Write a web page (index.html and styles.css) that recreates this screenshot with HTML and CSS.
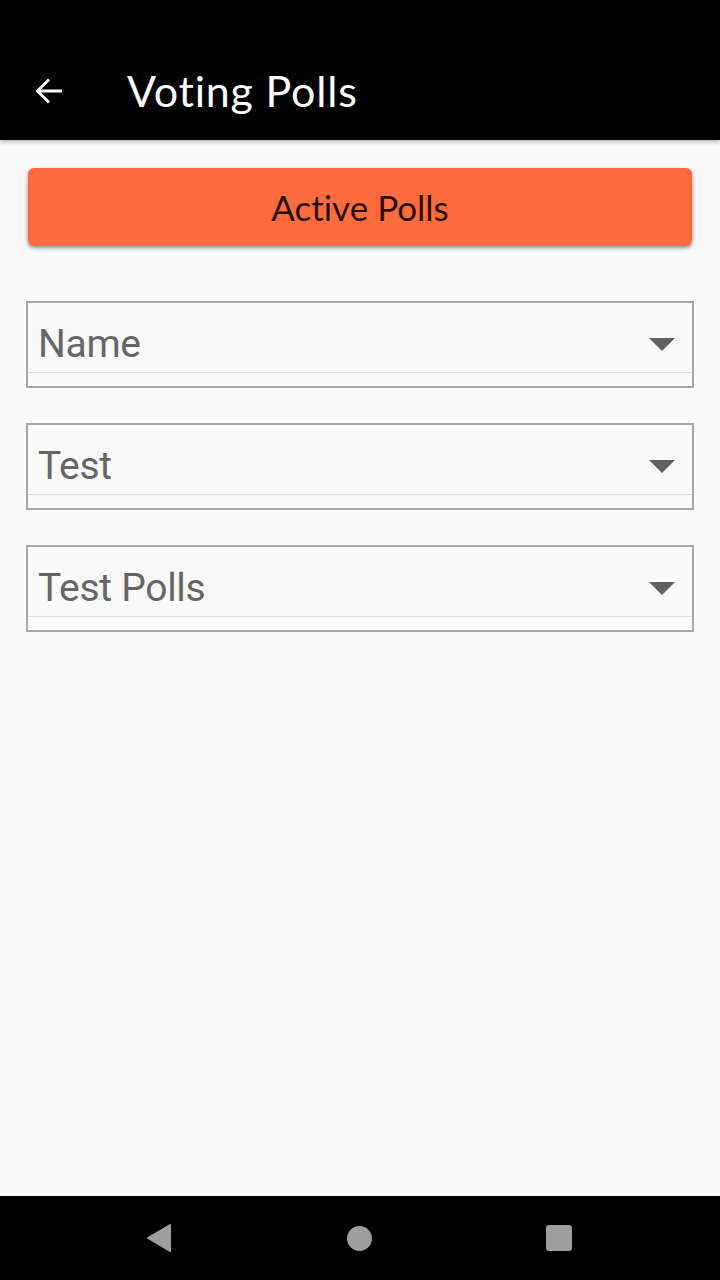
FILE: index.html
```html
<!DOCTYPE html>
<html>
<head>
<meta charset="utf-8">
<link rel="stylesheet" href="styles.css">
</head>
<body>
<div class="screen">
  <header class="appbar">
    <div class="toolbar">
      <svg class="back" width="28" height="28" viewBox="0 0 28 28"><path d="M27 14H2.5M14 2.5L2.5 14 14 25.5" fill="none" stroke="#fff" stroke-width="3"/></svg>
      <h1 class="title">Voting Polls</h1>
    </div>
  </header>
  <main class="content">
    <button class="primary">Active Polls</button>
    <div class="spinner"><div class="row"><span class="value">Name</span><span class="caret"></span></div></div>
    <div class="spinner"><div class="row"><span class="value">Test</span><span class="caret"></span></div></div>
    <div class="spinner"><div class="row"><span class="value">Test Polls</span><span class="caret"></span></div></div>
  </main>
  <nav class="navbar">
    <svg width="26" height="30" viewBox="0 0 26 30"><path d="M24 2 L2 15 L24 28 Z" fill="#9e9e9e" stroke="#9e9e9e" stroke-width="2" stroke-linejoin="round"/></svg>
    <span class="home"></span>
    <span class="recent"></span>
  </nav>
</div>
</body>
</html>
```
FILE: styles.css
```css
html, body { margin: 0; padding: 0; }
body { background: #fafafa; font-family: "Lato", "Open Sans", sans-serif; font-variant-ligatures: none; }
.screen { width: 720px; height: 1280px; display: flex; flex-direction: column; overflow: hidden; }
.appbar { background: #000; height: 140px; display: flex; flex-direction: column; justify-content: flex-end; box-shadow: 0 2px 4px rgba(0,0,0,0.25); position: relative; z-index: 1; }
.toolbar { height: 92px; display: flex; align-items: center; padding-bottom: 8px; box-sizing: border-box; }
.back { margin-left: 35px; margin-top: 2px; }
.title { margin: 0 0 0 64px; color: #fff; font-weight: 400; font-size: 43px; font-family: "Lato", sans-serif; letter-spacing: 0.8px; font-variant-ligatures: none; }
.content { flex: 1; padding: 28px 27px 0 26px; display: flex; flex-direction: column; }
.primary { height: 78px; margin: 0 1px 55px 2px; background: #ff6d3f; border: none; border-radius: 6px; box-shadow: 0 2px 4px rgba(0,0,0,0.45); color: #2a0f06; font-family: "Lato", sans-serif; font-size: 35px; padding: 0; font-variant-ligatures: none; }
.spinner { height: 87px; border: 2px solid #a8a8a8; box-sizing: border-box; margin-bottom: 35px; margin-right: -1px; }
.row { height: 69px; border-bottom: 1px solid #dcdcdc; display: flex; align-items: center; justify-content: space-between; padding: 0 17px 0 10px; }
.value { font-family: Roboto, sans-serif; font-size: 39px; color: #666; margin-top: 13px; letter-spacing: -0.3px; }
.caret { width: 0; height: 0; border-left: 13px solid transparent; border-right: 13px solid transparent; border-top: 13px solid #606060; margin-top: 14px; }
.navbar { height: 84px; background: #000; display: flex; align-items: center; justify-content: space-between; padding: 0 148px 0 146px; }
.home { width: 25px; height: 25px; border-radius: 50%; background: #9e9e9e; }
.recent { width: 26px; height: 26px; border-radius: 3px; background: #9e9e9e; }
```
